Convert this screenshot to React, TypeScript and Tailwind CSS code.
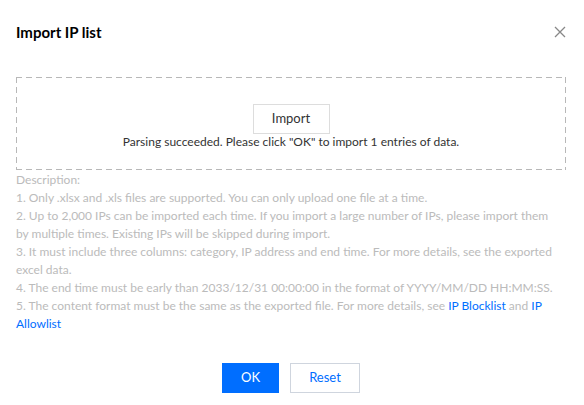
import React from "react";

export default function App() {
  const font = { fontFamily: '"Segoe UI", Lato, "Liberation Sans", sans-serif' };
  return (
    <div className="w-[584px] h-[405px] bg-white px-4" style={font}>
      <div className="flex items-center justify-between pt-[22px] h-[42px]">
        <div className="text-[15px] leading-[20px] font-bold text-[#000]">Import IP list</div>
        <svg width="12" height="12" viewBox="0 0 12 12" className="mr-[2px]">
          <path d="M1 1L11 11M11 1L1 11" stroke="#888" strokeWidth="1.3" />
        </svg>
      </div>
      <div className="mt-[35px] w-[550px] h-[93px] flex flex-col items-center pt-[27px] bg-[linear-gradient(to_right,#b8b8b8_60%,transparent_0),linear-gradient(to_right,#b8b8b8_60%,transparent_0),linear-gradient(to_bottom,#b8b8b8_60%,transparent_0),linear-gradient(to_bottom,#b8b8b8_60%,transparent_0)] bg-[length:10px_1px,10px_1px,1px_10px,1px_10px] bg-[position:top_left,bottom_left,top_left,top_right] [background-repeat:repeat-x,repeat-x,repeat-y,repeat-y]">
        <button className="w-[77px] h-[30px] border border-[#ddd] bg-white text-[13px] text-[#333]">Import</button>
        <div className="text-[12px] leading-[16px] text-[#333]">
          Parsing succeeded. Please click "OK" to import 1 entries of data.
        </div>
      </div>
      <div className="mt-px text-[12px] leading-[18px] text-[#bbb] w-[550px]">
        <div>Description:</div>
        <div>1. Only .xlsx and .xls files are supported. You can only upload one file at a time.</div>
        <div>
          2. Up to 2,000 IPs can be imported each time. If you import a large number of IPs, please import them
          <br />
          by multiple times. Existing IPs will be skipped during import.
        </div>
        <div>
          3. It must include three columns: category, IP address and end time. For more details, see the exported
          <br />
          excel data.
        </div>
        <div>4. The end time must be early than 2033/12/31 00:00:00 in the format of YYYY/MM/DD HH:MM:SS.</div>
        <div>
          5. The content format must be the same as the exported file. For more details, see{" "}
          <span className="text-[#006eff]">IP Blocklist</span> and <span className="text-[#006eff]">IP</span>
          <br />
          <span className="text-[#006eff]">Allowlist</span>
        </div>
      </div>
      <div className="mt-[30px] flex justify-center gap-[11px] pr-[2px]">
        <button className="w-[57px] h-[30px] bg-[#006eff] text-white text-[13px]">OK</button>
        <button className="w-[70px] h-[30px] border border-[#cfd5de] bg-white text-[#006eff] text-[13px]">Reset</button>
      </div>
    </div>
  );
}
